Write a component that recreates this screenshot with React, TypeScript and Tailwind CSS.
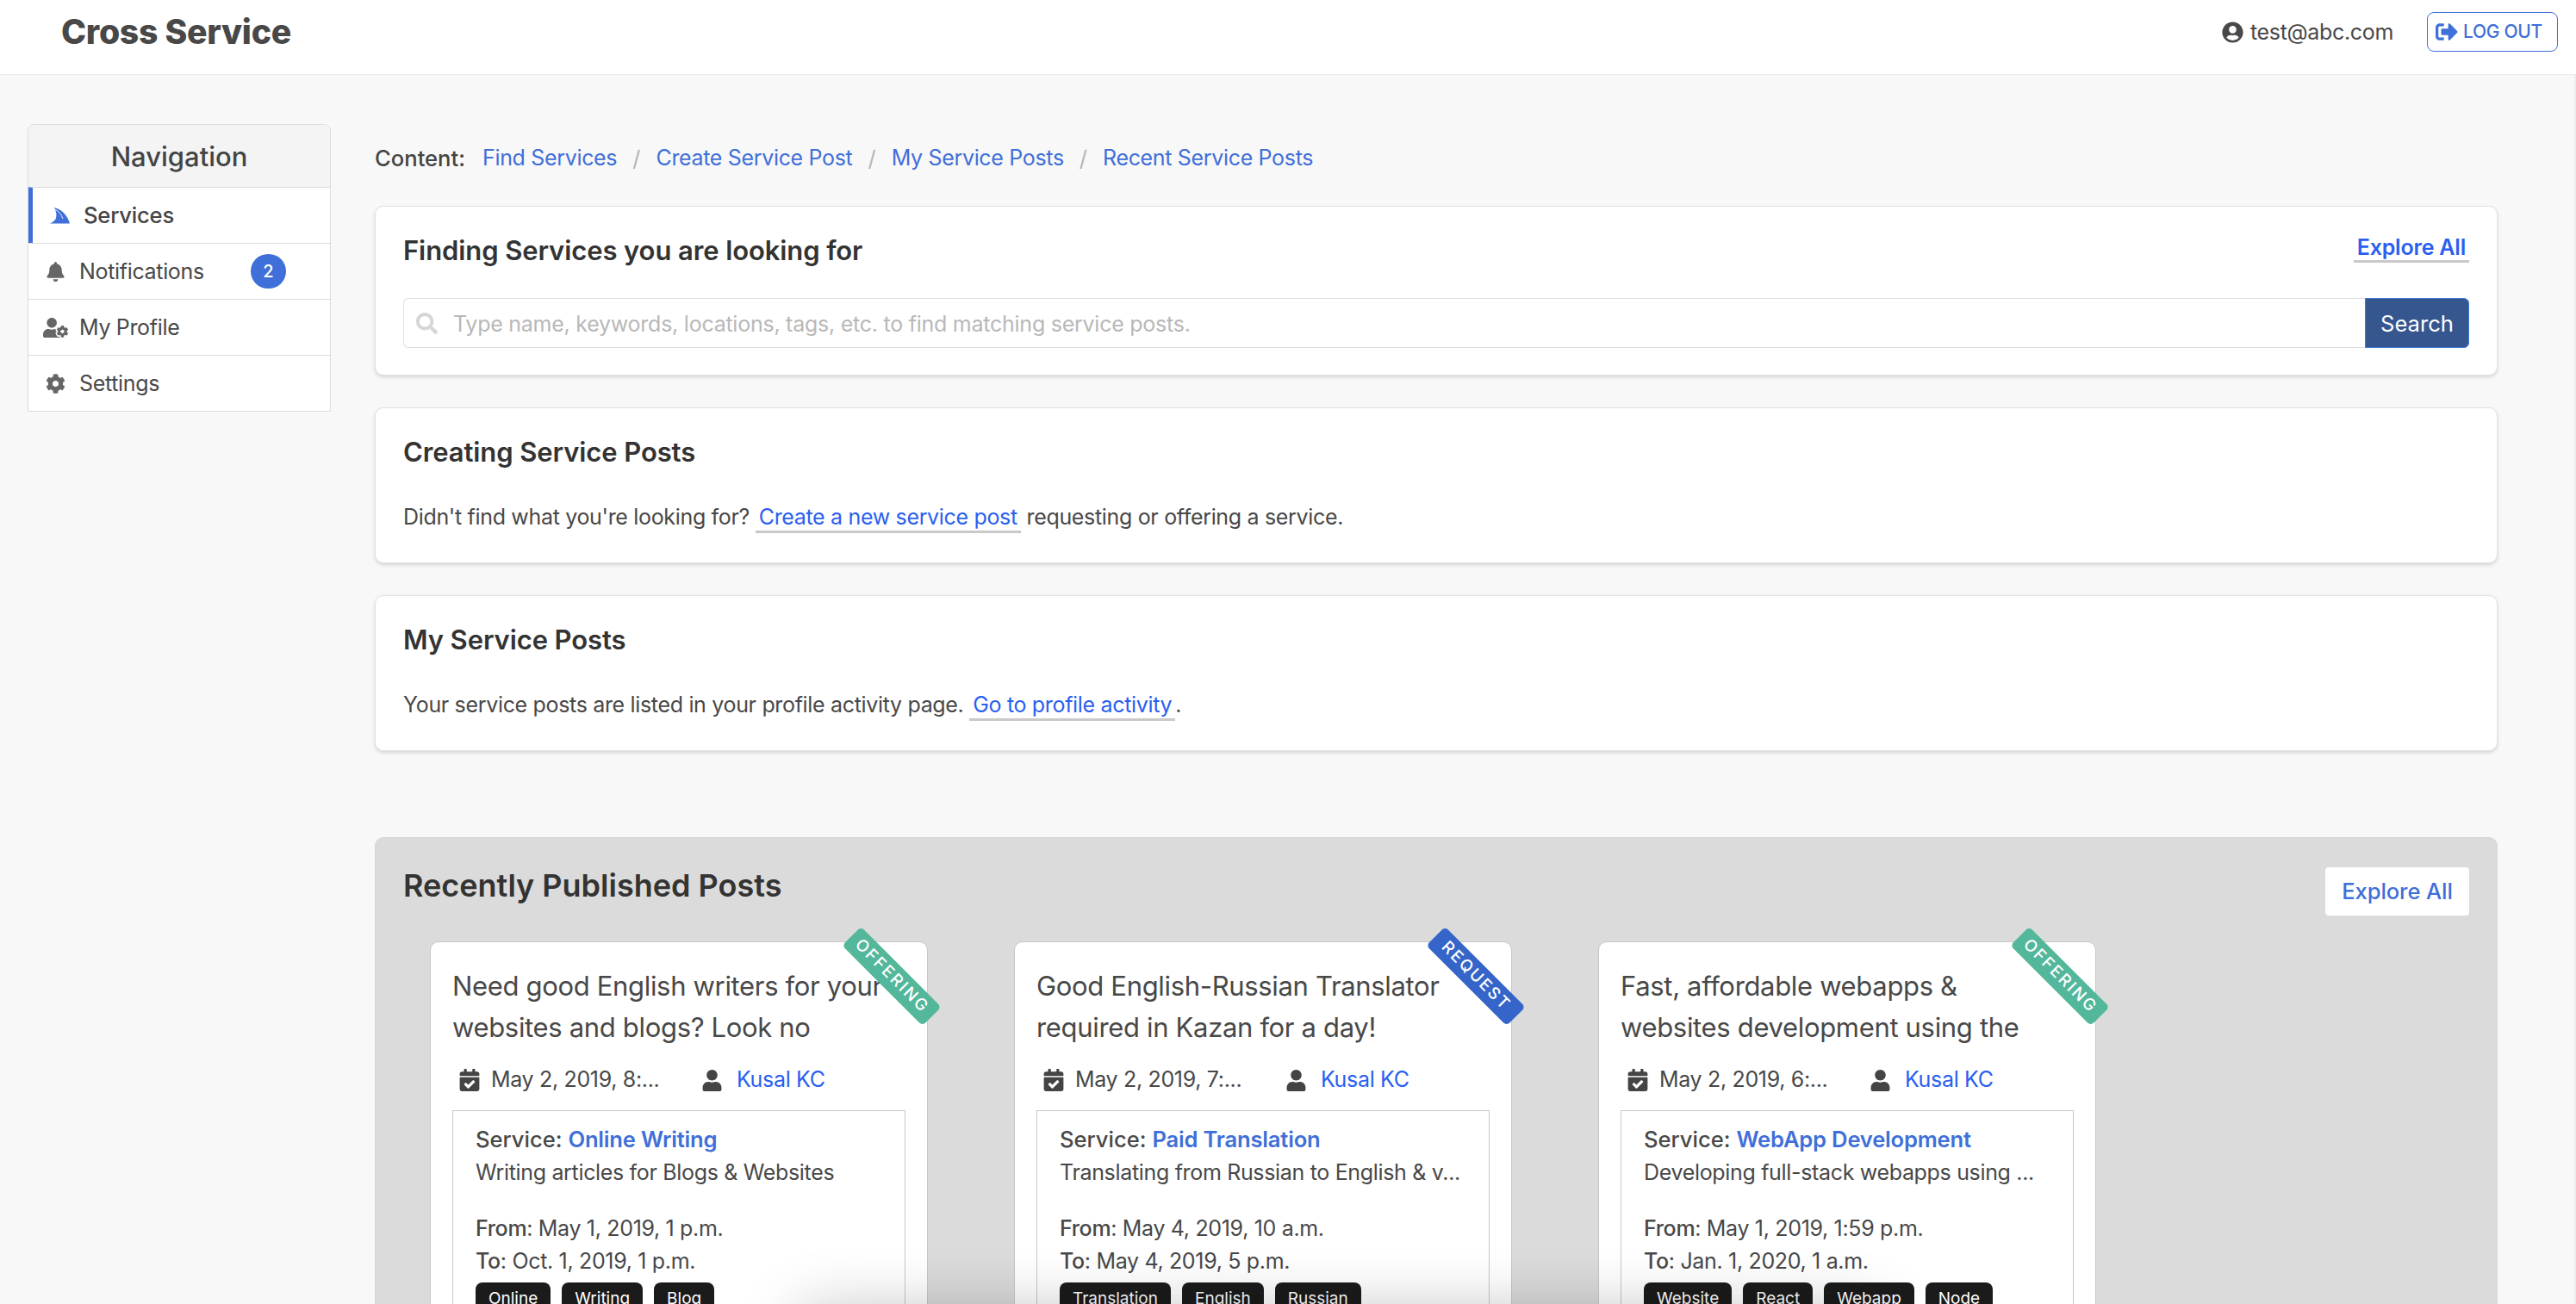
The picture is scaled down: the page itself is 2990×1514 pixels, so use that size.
import React from "react";
import { FaBell, FaCalendarCheck, FaCog, FaSearch, FaSignOutAlt, FaUser, FaUserCircle, FaUserCog } from "react-icons/fa";

function Fin({ className }: { className?: string }) {
  return (
    <svg viewBox="0 0 23 19" className={className}>
      <path d="M5 0C13 2 20 8 23 18.500L0 18.500C3 17 6 15.500 7 12C8 8 7 4 5 0Z" fill="#3f6fd8" />
      <path d="M6 2C10 4.500 13.500 8 15 13" fill="none" stroke="#ffffff" strokeWidth="0.9" />
    </svg>
  );
}

type NavProps = { icon: React.ReactNode; label: string; active?: boolean; badge?: string };

function NavItem({ icon, label, active, badge }: NavProps) {
  if (active) {
    return (
      <div className="-ml-px flex h-[65px] items-center border-t border-[#dcdcdc] border-l-[6px] border-l-[#3f6fd8] pl-[20px] font-medium tracking-[-0.2px] text-[#444444]">
        <span className="flex w-[39px] shrink-0 items-center">{icon}</span>
        <span>{label}</span>
      </div>
    );
  }
  return (
    <div className="flex h-[65px] items-center border-t border-[#dcdcdc] pl-[18px] text-[25px] tracking-[-0.33px] text-[#484848]">
      <span className="mr-[14px] flex w-[27px] shrink-0 items-center justify-center text-[#666666]">{icon}</span>
      <span className="pt-[2px]">{label}</span>
      {badge ? (
        <span className="ml-[54px] flex h-[40px] w-[41px] items-center justify-center rounded-full bg-[#3f6fd8] text-[20px] font-medium text-white">{badge}</span>
      ) : null}
    </div>
  );
}

function Crumb({ children }: { children: string }) {
  return <span className="text-[25px] tracking-[-0.33px] text-[#3f6fd8]">{children}</span>;
}

function Sep() {
  return <span className="mx-[18px] text-[#b5b5b5]">/</span>;
}

function Panel({ children }: { children: React.ReactNode }) {
  return <section className="rounded-[10px] border border-[#e2e2e2] bg-white px-[32px] shadow-[0_2px_4px_rgba(0,0,0,0.14)]">{children}</section>;
}

function TextLink({ children }: { children: string }) {
  return <span className="border-b-[3px] border-[#c9c9c9] px-[4px] pb-[1px] text-[#2a5ff0]">{children}</span>;
}

type Post = {
  kind: string;
  title: string;
  date: string;
  service: string;
  desc: string;
  from: string;
  to: string;
  tags: string[];
};

const posts: Post[] = [
  {
    kind: "OFFERING",
    title: "Need good English writers for your websites and blogs? Look no",
    date: "May 2, 2019, 8:...",
    service: "Online Writing",
    desc: "Writing articles for Blogs & Websites",
    from: "May 1, 2019, 1 p.m.",
    to: "Oct. 1, 2019, 1 p.m.",
    tags: ["Online", "Writing", "Blog"],
  },
  {
    kind: "REQUEST",
    title: "Good English-Russian Translator required in Kazan for a day!",
    date: "May 2, 2019, 7:...",
    service: "Paid Translation",
    desc: "Translating from Russian to English & v...",
    from: "May 4, 2019, 10 a.m.",
    to: "May 4, 2019, 5 p.m.",
    tags: ["Translation", "English", "Russian"],
  },
  {
    kind: "OFFERING",
    title: "Fast, affordable webapps & websites development using the",
    date: "May 2, 2019, 6:...",
    service: "WebApp Development",
    desc: "Developing full-stack webapps using ...",
    from: "May 1, 2019, 1:59 p.m.",
    to: "Jan. 1, 2020, 1 a.m.",
    tags: ["Website", "React", "Webapp", "Node"],
  },
];

function PostCard({ post }: { post: Post }) {
  return (
    <article className="relative h-[600px] w-[578px] shrink-0 rounded-[10px] border border-[#c8c8c8] bg-white px-[25px] pt-[27px]">
      <div className="absolute right-[-25px] top-[24px] flex h-[31px] w-[132px] rotate-45 items-center justify-center rounded-[5px] text-[19px] font-medium tracking-[2.2px] text-white" style={{ backgroundColor: post.kind === "REQUEST" ? "#3565c8" : "#53b79b" }}>
        {post.kind}
      </div>
      <h3 className="h-[96px] overflow-hidden text-[31px] leading-[48px] tracking-[-0.33px] text-[#484848]">{post.title}</h3>
      <div className="mt-[18px] flex h-[38px] items-center text-[25px] tracking-[-0.33px]">
        <FaCalendarCheck className="ml-[7px] shrink-0 text-[26px] text-[#444444]" />
        <span className="ml-[12px] w-[244px] shrink-0 text-[#484848]">{post.date}</span>
        <FaUser className="shrink-0 text-[25px] text-[#444444]" />
        <span className="ml-[16px] text-[#2a5ff0]">Kusal KC</span>
      </div>
      <div className="mt-[16px] h-[300px] border border-[#c8c8c8] px-[26px] pt-[14px] text-[25px] tracking-[-0.33px]">
        <p className="text-[25.6px] leading-[38px] font-medium tracking-[0px] text-[#484848]">
          Service: <span className="font-semibold tracking-[-0.2px] text-[#3f6fd8]">{post.service}</span>
        </p>
        <p className="truncate leading-[39px] text-[#484848]">{post.desc}</p>
        <p className="mt-[26px] leading-[38px] text-[#484848]">
          <span className="font-medium">From</span>: {post.from}
        </p>
        <p className="leading-[38px] text-[#484848]">
          <span className="font-medium">To</span>: {post.to}
        </p>
        <div className="mt-[6px] flex gap-[13px]">
          {post.tags.map((t) => (
            <span key={t} className="flex h-[38px] items-center rounded-[8px] bg-[#1b1b1b] px-[15px] text-[19px] tracking-[0px] text-white">{t}</span>
          ))}
        </div>
      </div>
    </article>
  );
}

export default function App() {
  return (
    <div className="relative h-[1514px] overflow-hidden bg-[#f8f8f8] font-['Inter',sans-serif] text-[25.6px] text-[#484848]">
      <header className="flex h-[87px] items-center justify-between border-b border-[#ececec] bg-white pl-[71px] pr-[21px]">
        <div className="-mt-[11px] text-[39.2px] font-extrabold tracking-[-0.3px] text-[#484848]">Cross Service</div>
        <div className="flex items-center pb-[12px]">
          <FaUserCircle className="text-[25px] text-[#484848]" />
          <span className="ml-[8px] pt-[2px] text-[25px] tracking-[-0.33px] text-[#484848]">test@abc.com</span>
          <span className="ml-[39px] flex h-[46px] w-[152px] items-center justify-center gap-[6px] rounded-[8px] border border-[#3f6fd8] pr-[8px] text-[21px] font-medium tracking-[-0.3px] text-[#3f6fd8]">
            <FaSignOutAlt className="text-[26px]" />
            LOG OUT
          </span>
        </div>
      </header>
      <div className="flex items-start pl-[32px]">
        <aside className="mt-[57px] w-[352px] shrink-0 overflow-hidden rounded-t-[8px] border border-[#dcdcdc] bg-white">
          <div className="flex h-[72px] items-center justify-center bg-[#f4f4f4] pt-[2px] text-[31px] font-medium text-[#444444]">Navigation</div>
          <NavItem active icon={<Fin className="h-[19px] w-[23px]" />} label="Services" />
          <NavItem icon={<FaBell className="shrink-0 text-[23px]" />} label="Notifications" badge="2" />
          <NavItem icon={<FaUserCog className="shrink-0 text-[29px]" />} label="My Profile" />
          <NavItem icon={<FaCog className="shrink-0 text-[23px]" />} label="Settings" />
        </aside>
        <main className="ml-[51px] w-[2464px] shrink-0 pt-[77px]">
          <div className="flex h-[40px] items-center">
            <span className="mr-[20px] font-medium text-[#444444]">Content:</span>
            <Crumb>Find Services</Crumb>
            <Sep />
            <Crumb>Create Service Post</Crumb>
            <Sep />
            <Crumb>My Service Posts</Crumb>
            <Sep />
            <Crumb>Recent Service Posts</Crumb>
          </div>
          <div className="mt-[35px] flex flex-col gap-[37px]">
            <Panel>
              <div className="flex h-[106px] items-center justify-between pb-[4px]">
                <h2 className="text-[31px] font-semibold tracking-[-0.1px] text-[#333333]">Finding Services you are looking for</h2>
                <span className="-mt-[6px] text-[25px] font-semibold tracking-[-0.2px]"><span className="border-b-[3px] border-[#c9c9c9] px-[4px] text-[#2a5ff0]">Explore All</span></span>
              </div>
              <div className="flex h-[58px] items-stretch">
                <div className="flex flex-1 items-center rounded-l-[6px] border border-r-0 border-[#dedede] pl-[14px]">
                  <FaSearch className="text-[25px] text-[#d6d6d6]" />
                  <span className="ml-[18px] pt-[3px] text-[25px] tracking-[-0.25px] text-[#b8b8b8]">Type name, keywords, locations, tags, etc. to find matching service posts.</span>
                </div>
                <div className="flex w-[121px] items-center justify-center rounded-r-[6px] border border-[#3f7bd8] bg-[#36568f] pt-[2px] text-white">Search</div>
              </div>
              <div className="h-[31px]" />
            </Panel>
            <Panel>
              <h2 className="flex h-[102px] items-center text-[31px] font-semibold tracking-[-0.1px] text-[#333333]">Creating Service Posts</h2>
              <p className="h-[77px] pt-[6px] text-[25px] tracking-[-0.33px]">
                Didn't find what you're looking for? <TextLink>Create a new service post</TextLink> requesting or offering a service.
              </p>
            </Panel>
            <Panel>
              <h2 className="flex h-[102px] items-center text-[31px] font-semibold tracking-[-0.1px] text-[#333333]">My Service Posts</h2>
              <p className="h-[77px] pt-[6px] text-[25px] tracking-[-0.33px]">
                Your service posts are listed in your profile activity page. <TextLink>Go to profile activity</TextLink>.
              </p>
            </Panel>
          </div>
          <section className="mt-[100px] h-[700px] rounded-[10px] border border-[#d6d6d6] bg-[#dbdbdb] px-[32px]">
            <div className="flex h-[120px] items-start justify-between pt-[33px]">
              <h2 className="text-[36px] leading-[44px] font-semibold text-[#333333]">Recently Published Posts</h2>
              <span className="mt-px flex h-[56px] w-[167px] items-center justify-center rounded-[4px] bg-white pt-[1px] font-medium tracking-[-0.1px] text-[#3f6fd8]">Explore All</span>
            </div>
            <div className="flex gap-[100px] pl-[31px]">
              {posts.map((p) => (
                <PostCard key={p.service} post={p} />
              ))}
            </div>
          </section>
        </main>
      </div>
      <div className="pointer-events-none absolute bottom-[-100px] left-[930px] h-[94px] w-[1250px] shadow-[0_0_70px_rgba(0,0,0,0.24)]" />
      <div className="absolute bottom-0 right-0 top-[87px] w-[2px] bg-[#ededed]" />
    </div>
  );
}
